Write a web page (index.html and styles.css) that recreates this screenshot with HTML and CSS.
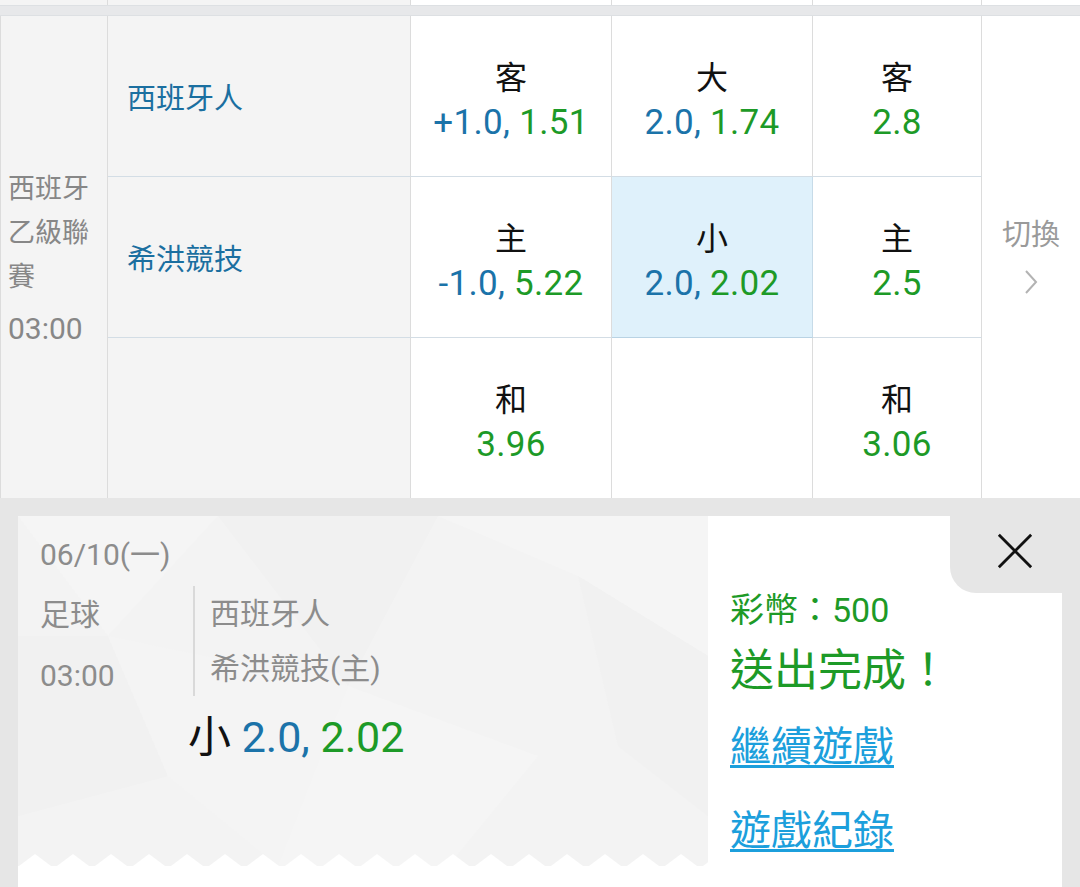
FILE: index.html
```html
<!DOCTYPE html>
<html lang="zh-Hant">
<head>
<meta charset="utf-8">
<title>投注完成</title>
<link rel="stylesheet" href="styles.css">
</head>
<body>
<div class="page">
  <div class="prev-row">
    <div class="pc pc-gray"></div>
    <div class="pc pc-gray"></div>
    <div class="pc"></div>
    <div class="pc"></div>
    <div class="pc"></div>
    <div class="pc pc-last"></div>
  </div>
  <div class="band"></div>

  <div class="table">
    <div class="league">
      <div class="league-name">西班牙乙級聯賽</div>
      <div class="league-time">03:00</div>
    </div>
    <div class="team r1">西班牙人</div>
    <div class="team r2">希洪競技</div>
    <div class="team r3"></div>

    <div class="odd c3 r1"><div class="lbl">客</div><div class="val"><span class="blue">+1.0,</span> <span class="green">1.51</span></div></div>
    <div class="odd c4 r1"><div class="lbl">大</div><div class="val"><span class="blue">2.0,</span> <span class="green">1.74</span></div></div>
    <div class="odd c5 r1"><div class="lbl">客</div><div class="val"><span class="green">2.8</span></div></div>

    <div class="odd c3 r2"><div class="lbl">主</div><div class="val"><span class="blue">-1.0,</span> <span class="green">5.22</span></div></div>
    <div class="odd c4 r2 selected"><div class="lbl">小</div><div class="val"><span class="blue">2.0,</span> <span class="green">2.02</span></div></div>
    <div class="odd c5 r2"><div class="lbl">主</div><div class="val"><span class="green">2.5</span></div></div>

    <div class="odd c3 r3"><div class="lbl">和</div><div class="val"><span class="green">3.96</span></div></div>
    <div class="odd c4 r3"></div>
    <div class="odd c5 r3"><div class="lbl">和</div><div class="val"><span class="green">3.06</span></div></div>

    <div class="switch">
      <div class="switch-text">切換</div>
      <svg class="chev" width="14" height="26" viewBox="0 0 14 26"><polyline points="2,2 12,13 2,24" fill="none" stroke="#b3b3b3" stroke-width="2"/></svg>
    </div>
  </div>

  <div class="overlay">
    <div class="modal">
      <div class="ticket">
        <svg class="facets" width="690" height="350" viewBox="0 0 690 350" preserveAspectRatio="none">
          <polygon points="0,0 200,0 90,120" fill="#f5f5f5"/>
          <polygon points="200,0 420,0 330,170" fill="#f1f1f1"/>
          <polygon points="420,0 690,0 690,140 560,60" fill="#f5f5f5"/>
          <polygon points="0,120 90,120 150,260 0,300" fill="#f1f1f1"/>
          <polygon points="330,170 520,240 430,350 260,350" fill="#f5f5f5"/>
          <polygon points="560,60 690,140 690,300 600,230" fill="#f1f1f1"/>
          <polygon points="90,120 330,170 260,350 150,260" fill="#f4f4f4"/>
        </svg>
        <div class="t-date">06/10(一)</div>
        <div class="t-info">
          <div class="t-left">
            <div>足球</div>
            <div>03:00</div>
          </div>
          <div class="t-right">
            <div>西班牙人</div>
            <div>希洪競技(主)</div>
          </div>
        </div>
        <div class="t-pick"><span class="black">小</span> <span class="blue">2.0,</span> <span class="green">2.02</span></div>
        <svg class="zigzag" width="690" height="14" viewBox="0 0 690 14" preserveAspectRatio="none">
          <defs>
            <pattern id="zz" x="-2" y="0" width="38" height="14" patternUnits="userSpaceOnUse">
              <polygon points="3,14 19,2 35,14" fill="#ffffff"/>
            </pattern>
          </defs>
          <rect x="0" y="0" width="690" height="14" fill="url(#zz)"/>
        </svg>
      </div>
      <div class="result">
        <div class="coins">彩幣：500</div>
        <div class="done">送出完成！</div>
        <a class="link first" href="#">繼續遊戲</a>
        <a class="link" href="#">遊戲紀錄</a>
        <div class="close">
          <svg width="40" height="40" viewBox="0 0 40 40"><path d="M3 3 L37 37 M37 3 L3 37" stroke="#111" stroke-width="3" fill="none"/></svg>
        </div>
      </div>
    </div>
  </div>
</div>
</body>
</html>
```

FILE: styles.css
```css
* { box-sizing: border-box; }
html, body { margin: 0; padding: 0; }
body {
  width: 1080px;
  height: 887px;
  overflow: hidden;
  background: #e6e6e6;
  font-family: Roboto, "Noto Sans CJK TC", "Noto Sans", sans-serif;
}
.page { width: 1080px; }

.prev-row {
  display: grid;
  grid-template-columns: 108px 303px 201px 201px 169px 98px;
  height: 5px;
  background: #fff;
}
.pc { border-right: 1px solid #dcdcdc; background: #fff; }
.pc-gray { background: #f4f4f4; }
.pc-last { border-right: none; }
.band {
  height: 11px;
  background: #e7e8ea;
  border-top: 1px solid #dde0e3;
  border-bottom: 1px solid #dde0e3;
}

.table {
  display: grid;
  grid-template-columns: 108px 303px 201px 201px 169px 98px;
  grid-template-rows: 161px 161px 160px;
  background: #fff;
}
.league {
  grid-column: 1;
  grid-row: 1 / 4;
  background: #f4f4f4;
  border-left: 1px solid #dcdcdc;
  border-right: 1px solid #dcdcdc;
  padding: 151px 0 0 7px;
  color: #878787;
  font-size: 27px;
  line-height: 44px;
}
.league-name { width: 88px; word-break: break-all; }
.league-time { font-size: 30px; line-height: 52px; margin-top: 4px; }

.team {
  grid-column: 2;
  background: #f4f4f4;
  border-right: 1px solid #dcdcdc;
  border-bottom: 1px solid #d3dde5;
  display: flex;
  align-items: center;
  padding-left: 19px;
  color: #1b6fa0;
  font-size: 29px;
}
.team.r3 { border-bottom: none; }
.r1 { grid-row: 1; }
.r2 { grid-row: 2; }
.r3 { grid-row: 3; }
.c3 { grid-column: 3; }
.c4 { grid-column: 4; }
.c5 { grid-column: 5; }

.odd {
  background: #fff;
  border-right: 1px solid #dcdcdc;
  border-bottom: 1px solid #d3dde5;
  display: flex;
  flex-direction: column;
  align-items: center;
  justify-content: center;
  padding-top: 9px;
}
.odd.r3 { border-bottom: none; }
.odd.selected { background: #dff1fb; border-right-color: #c7dbe8; border-bottom-color: #b9d3e4; }
.lbl { font-size: 32px; line-height: 44px; color: #111; }
.val { font-size: 35px; line-height: 46px; letter-spacing: 0.3px; }
.blue { color: #1b73a9; }
.green { color: #1d9a27; }
.black { color: #111; }

.switch {
  grid-column: 6;
  grid-row: 1 / 4;
  background: #fff;
  display: flex;
  flex-direction: column;
  align-items: center;
  justify-content: center;
  padding-bottom: 4px;
}
.switch-text { color: #9a9a9a; font-size: 29px; line-height: 40px; }
.chev { margin-top: 14px; }

.overlay {
  background: #e6e6e6;
  padding: 18px 18px 0 18px;
}
.modal {
  display: grid;
  grid-template-columns: 690px 354px;
  height: 400px;
  background: #fff;
}
.ticket {
  position: relative;
  height: 350px;
  background: #f3f3f3;
  padding: 19px 0 0 22px;
  color: #8c8c8c;
  font-size: 30px;
}
.facets { position: absolute; left: 0; top: 0; }
.t-date, .t-info, .t-pick { position: relative; }
.t-date { line-height: 40px; }
.t-info { display: flex; margin-top: 9px; }
.t-left { width: 153px; line-height: 61px; }
.t-right {
  margin-top: 2px;
  height: 110px;
  border-left: 2px solid #d9d9d9;
  padding-left: 15px;
  line-height: 55px;
}
.t-pick {
  margin-top: 6px;
  padding-left: 148px;
  font-size: 43px;
  line-height: 50px;
}
.zigzag { position: absolute; left: 0; bottom: 0; display: block; }

.result {
  position: relative;
  background: #fff;
  padding: 72px 0 0 22px;
  display: flex;
  flex-direction: column;
  align-items: flex-start;
}
.coins { color: #1d9a27; font-size: 34px; line-height: 44px; }
.done { color: #1d9a27; font-size: 44px; line-height: 56px; margin-top: 11px; }
.link {
  color: #1c9fdc;
  font-size: 41px;
  line-height: 52px;
  text-decoration: underline;
  text-decoration-thickness: 3px;
  text-underline-offset: 4px;
}
.link.first { margin-top: 22px; }
.link + .link { margin-top: 32px; }
.close {
  position: absolute;
  top: 0;
  right: 0;
  width: 112px;
  height: 77px;
  background: #e6e6e6;
  border-bottom-left-radius: 26px;
  display: flex;
  align-items: center;
  justify-content: center;
  padding-bottom: 7px;
  padding-left: 18px;
}
.close svg { width: 38px; height: 38px; }
```
